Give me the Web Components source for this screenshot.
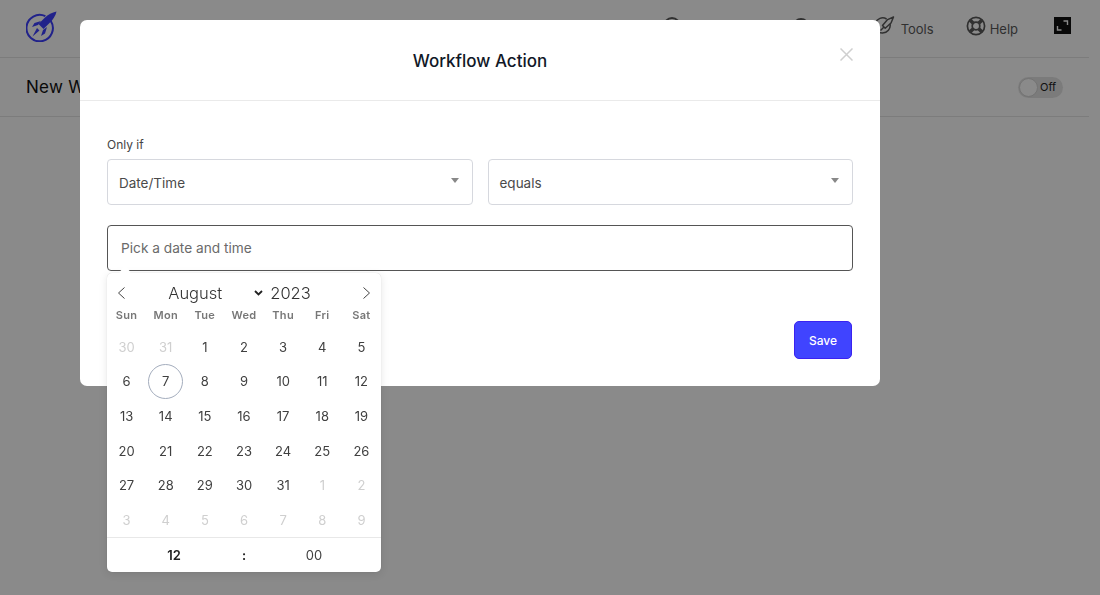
<!DOCTYPE html>
<html>
<head>
<meta charset="utf-8">
<title>Workflow Action</title>
<style>
  html, body { margin: 0; height: 100%; overflow: hidden; }
  body { font-family: Inter, "Liberation Sans", sans-serif; color: #111; background: #fff; }
</style>
</head>
<body>
<wf-page>
  <wf-topbar></wf-topbar>
  <wf-subbar>New Workflow</wf-subbar>
</wf-page>
<wf-modal heading="Workflow Action">
  <div style="font-size: 12px; line-height: 16px; color: #444; margin-bottom: 6px;">Only if</div>
  <div style="display: grid; grid-template-columns: 1fr 1fr; gap: 15px;">
    <wf-select>Date/Time</wf-select>
    <wf-select>equals</wf-select>
  </div>
  <wf-date-input placeholder="Pick a date and time"></wf-date-input>
  <div style="display: flex; justify-content: flex-end; margin: 50px 1px 0 0;">
    <wf-button>Save</wf-button>
  </div>
</wf-modal>

<script>
'use strict';

class WfPage extends HTMLElement {
  constructor() {
    super();
    let root = this.attachShadow({ mode: 'open' });
    root.innerHTML = `
      <style>
        :host { display: block; width: 1089px; }
      </style>
      <slot></slot>
    `;
  }
}

class WfTopbar extends HTMLElement {
  constructor() {
    super();
    let root = this.attachShadow({ mode: 'open' });
    root.innerHTML = `
      <style>
        :host {
          display: flex;
          align-items: center;
          height: 58px;
          box-sizing: border-box;
          padding: 0 18px 0 26px;
          border-bottom: 1px solid #e6e6e6;
        }
        .logo { width: 31px; height: 31px; margin-top: -4px; }
        nav { margin-left: auto; display: flex; align-items: center; font-size: 13px; color: #5a5a5a; }
        .item { display: flex; align-items: center; gap: 6px; }
        .item svg { width: 20px; height: 20px; margin-top: -5px; }
        .item span { margin-top: 1px; }
        .full { width: 17px; height: 17px; margin-left: 36px; margin-top: -6px; }
      </style>
      <svg class="logo" viewBox="0 0 31 31">
        <path d="M24.8 10 A13.2 13.2 0 1 1 19.4 5.2" fill="none" stroke="#3d3fff" stroke-width="2"/>
        <path d="M30.5 0.5 C26 1.5 22 3.5 19 6.5 L12.5 13 L17.5 18 L24 11.5 C27 8.5 29.5 5 30.5 0.5 Z" fill="#3d3fff"/>
        <path d="M15 10 L8.5 12 L6 16 L12 14 Z M21 16 L19 22.5 L15 25 L17 19 Z M11 17 L13.5 19.5 L6.5 25.5 Z" fill="#3d3fff"/>
      </svg>
      <nav>
        <div class="item" style="margin-right: 109px;"><svg viewBox="0 0 20 20"><circle cx="10" cy="10" r="8" fill="none" stroke="#5a5a5a" stroke-width="1.8"/></svg></div>
        <div class="item" style="margin-right: 64px;"><svg viewBox="0 0 20 20"><circle cx="10" cy="10" r="8" fill="#5a5a5a"/></svg></div>
        <div class="item" style="margin-right: 32px;">
          <svg viewBox="0 0 20 20" fill="none" stroke="#5a5a5a" stroke-width="1.5">
            <path d="M15 7.8 A7.6 7.6 0 1 1 11.6 3"/>
            <path d="M18.5 1 L12.6 3.6 L7.5 9.5 L10.2 12.2 L16 7 Z" stroke-linejoin="round"/>
            <path d="M5.5 14.5 L9 11"/>
          </svg>
          <span style="margin-top: 0;">Tools</span>
        </div>
        <div class="item" style="gap: 4px;">
          <svg viewBox="0 0 20 20" fill="none" stroke="#5a5a5a">
            <circle cx="10" cy="10" r="8.6" stroke-width="1.7"/>
            <circle cx="10" cy="10" r="3.8" stroke-width="1.7"/>
            <path d="M4.2 4.2 L7.3 7.3 M15.8 4.2 L12.7 7.3 M4.2 15.8 L7.3 12.7 M15.8 15.8 L12.7 12.7" stroke-width="3.6"/>
          </svg>
          <span>Help</span>
        </div>
        <svg class="full" viewBox="0 0 17 17">
          <rect width="17" height="17" fill="#111"/>
          <path d="M3.5 9 V13 H7.5 M9.5 4 H13.5 V8" fill="none" stroke="#fff" stroke-width="1.4"/>
        </svg>
      </nav>
    `;
  }
}

class WfSubbar extends HTMLElement {
  constructor() {
    super();
    let root = this.attachShadow({ mode: 'open' });
    root.innerHTML = `
      <style>
        :host {
          display: flex;
          align-items: center;
          height: 59px;
          box-sizing: border-box;
          padding: 0 26px;
          border-bottom: 1px solid #e6e6e6;
          font-size: 17px;
          letter-spacing: 0.3px;
        }
        .toggle {
          margin-left: auto;
          display: flex;
          align-items: center;
          width: 45px;
          height: 21px;
          box-sizing: border-box;
          border-radius: 11px;
          background: #e4e4e4;
          font-size: 11px;
          letter-spacing: 0;
          color: #222;
        }
        .knob {
          width: 19px;
          height: 19px;
          margin-left: 1px;
          margin-right: 2px;
          border-radius: 50%;
          background: #fff;
          border: 1px solid #d4d4d4;
          box-sizing: border-box;
        }
      </style>
      <slot></slot>
      <div class="toggle"><div class="knob"></div>Off</div>
    `;
  }
}

class WfModal extends HTMLElement {
  constructor() {
    super();
    let root = this.attachShadow({ mode: 'open' });
    root.innerHTML = `
      <style>
        :host {
          position: fixed;
          inset: 0;
          display: block;
          background: rgba(0, 0, 0, 0.46);
        }
        .box {
          margin: 20px 0 0 80px;
          width: 800px;
          height: 366px;
          box-sizing: border-box;
          background: #fff;
          border-radius: 7px;
        }
        header {
          position: relative;
          height: 81px;
          box-sizing: border-box;
          padding-top: 1px;
          border-bottom: 1px solid #eaeaea;
          display: flex;
          align-items: center;
          justify-content: center;
          font-size: 17px;
          font-weight: 500;
          color: #111827;
        }
        .close { position: absolute; left: 760px; top: 28px; width: 13px; height: 13px; }
        .body { padding: 36px 27px 0 27px; }
      </style>
      <div class="box">
        <header>
          <span id="heading"></span>
          <svg class="close" viewBox="0 0 13 13"><path d="M0.5 0.5 L12.5 12.5 M12.5 0.5 L0.5 12.5" stroke="#cfcfcf" stroke-width="1.5"/></svg>
        </header>
        <div class="body"><slot></slot></div>
      </div>
    `;
    root.getElementById('heading').textContent = this.getAttribute('heading');
  }
}

class WfSelect extends HTMLElement {
  constructor() {
    super();
    let root = this.attachShadow({ mode: 'open' });
    root.innerHTML = `
      <style>
        :host {
          display: flex;
          align-items: center;
          justify-content: space-between;
          height: 46px;
          box-sizing: border-box;
          padding: 1px 13px 0 11px;
          border: 1px solid #d6d8de;
          border-radius: 4px;
          font-size: 13.5px;
          color: #4a4a4a;
        }
        i {
          width: 0;
          height: 0;
          margin-top: -5px;
          border-left: 4px solid transparent;
          border-right: 4px solid transparent;
          border-top: 5px solid #888;
        }
      </style>
      <slot></slot>
      <i></i>
    `;
  }
}

class WfDateInput extends HTMLElement {
  constructor() {
    super();
    let root = this.attachShadow({ mode: 'open' });
    root.innerHTML = `
      <style>
        :host { display: block; position: relative; margin-top: 20px; }
        .field {
          height: 46px;
          box-sizing: border-box;
          display: flex;
          align-items: center;
          padding: 0 13px;
          border: 1px solid #555;
          border-radius: 4px;
          font-size: 13.7px;
          color: #6a6a6a;
        }
        wf-calendar { position: absolute; left: 0; top: 48px; }
      </style>
      <div class="field" id="field"></div>
      <wf-calendar></wf-calendar>
    `;
    root.getElementById('field').textContent = this.getAttribute('placeholder');
  }
}

class WfCalendar extends HTMLElement {
  constructor() {
    super();
    let root = this.attachShadow({ mode: 'open' });
    root.innerHTML = `
      <style>
        :host {
          display: block;
          width: 274px;
          height: 299px;
          box-sizing: border-box;
          background: #fff;
          border-radius: 5px;
          box-shadow: 0 2px 8px rgba(0, 0, 0, 0.1), 0 0 1px rgba(0, 0, 0, 0.2);
          color: #404040;
        }
        .arrow {
          position: absolute;
          left: 14px;
          top: -5px;
          width: 8px;
          height: 8px;
          background: #fff;
          transform: rotate(45deg);
        }
        .month {
          position: relative;
          display: flex;
          align-items: center;
          justify-content: space-between;
          height: 34px;
          padding: 6px 10px 0 10px;
          box-sizing: border-box;
        }
        .month svg { width: 10px; height: 12px; }
        .title { display: flex; align-items: center; margin-right: 9px; font-size: 16.5px; font-weight: 300; color: #333; }
        .title .m { width: 86px; }
        .title svg { width: 9px; height: 6px; margin-right: 7px; }
        .grid { display: grid; grid-template-columns: repeat(7, 1fr); }
        .wk { height: 16px; font-size: 11px; font-weight: 600; line-height: 16px; letter-spacing: 0.3px; text-align: center; color: #777; }
        .day { display: flex; align-items: center; justify-content: center; height: 34.6px; font-size: 13px; position: relative; }
        .day.other { color: #cfcfcf; }
        .day.today::before {
          content: '';
          position: absolute;
          left: 2px;
          top: 0;
          width: 33px;
          height: 33px;
          border: 1px solid #a4adbd;
          border-radius: 50%;
        }
        .time {
          display: grid;
          grid-template-columns: 1fr 6px 1fr;
          align-items: center;
          height: 36px;
          box-sizing: border-box;
          padding-bottom: 2px;
          border-top: 1px solid #e8e8e8;
          font-size: 13px;
          text-align: center;
        }
        .time b { font-weight: 600; color: #222; }
      </style>
      <div class="arrow"></div>
      <div class="month">
        <svg viewBox="0 0 10 12"><path d="M7.5 0.5 L1.5 6 L7.5 11.5" fill="none" stroke="#444" stroke-width="1"/></svg>
        <div class="title">
          <span class="m">August</span>
          <svg viewBox="0 0 9 6"><path d="M1 1 L4.5 4.5 L8 1" fill="none" stroke="#222" stroke-width="1.8"/></svg>
          <span>2023</span>
        </div>
        <svg viewBox="0 0 10 12"><path d="M2.5 0.5 L8.5 6 L2.5 11.5" fill="none" stroke="#444" stroke-width="1"/></svg>
      </div>
      <div class="grid" id="head"></div>
      <div class="grid" id="days" style="margin-top: 6.5px;"></div>
      <div class="time"><b>12</b><b>:</b><span>00</span></div>
    `;

    let head = root.getElementById('head');
    ['Sun', 'Mon', 'Tue', 'Wed', 'Thu', 'Fri', 'Sat'].forEach((name) => {
      let div = document.createElement('div');
      div.className = 'wk';
      div.textContent = name;
      head.appendChild(div);
    });

    // Aug 2023 starts on a Tuesday, two days of July show before it.
    let days = root.getElementById('days');
    let cells = [[30, true], [31, true]];
    for (let i = 1; i <= 31; ++i)
      cells.push([i, false]);
    for (let i = 1; i <= 9; ++i)
      cells.push([i, true]);
    cells.forEach(([n, other]) => {
      let div = document.createElement('div');
      div.className = 'day' + (other ? ' other' : '') + (!other && n == 7 ? ' today' : '');
      div.textContent = n;
      days.appendChild(div);
    });
  }
}

class WfButton extends HTMLElement {
  constructor() {
    super();
    let root = this.attachShadow({ mode: 'open' });
    root.innerHTML = `
      <style>
        :host {
          display: flex;
          align-items: center;
          justify-content: center;
          width: 58px;
          height: 38px;
          box-sizing: border-box;
          background: #4044ff;
          border: 1px solid #3a22f0;
          border-radius: 5px;
          color: #fff;
          font-size: 12px;
          font-weight: 500;
        }
      </style>
      <slot></slot>
    `;
  }
}

customElements.define('wf-page', WfPage);
customElements.define('wf-topbar', WfTopbar);
customElements.define('wf-subbar', WfSubbar);
customElements.define('wf-calendar', WfCalendar);
customElements.define('wf-modal', WfModal);
customElements.define('wf-select', WfSelect);
customElements.define('wf-date-input', WfDateInput);
customElements.define('wf-button', WfButton);
</script>
</body>
</html>
